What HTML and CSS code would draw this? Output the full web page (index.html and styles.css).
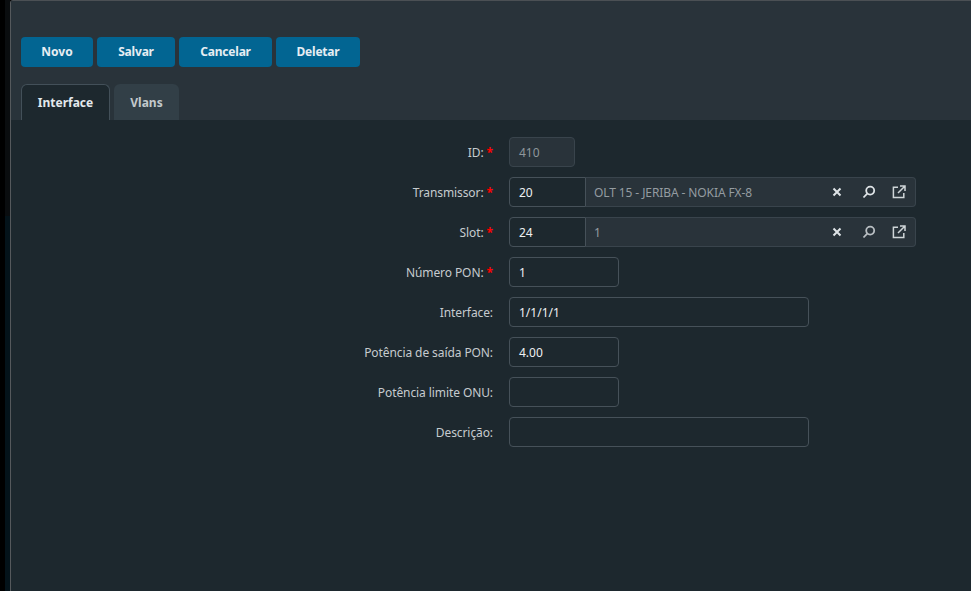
FILE: index.html
```html
<!DOCTYPE html>
<html lang="pt">
<head>
<meta charset="utf-8">
<title>Interface</title>
<link rel="stylesheet" href="styles.css">
</head>
<body>
<div class="backdrop"></div>
<main class="window">
  <header class="head">
    <div class="toolbar">
      <button class="btn btn-novo">Novo</button>
      <button class="btn btn-salvar">Salvar</button>
      <button class="btn btn-cancelar">Cancelar</button>
      <button class="btn btn-deletar">Deletar</button>
    </div>
    <nav class="tabs">
      <div class="tab tab-active">Interface</div>
      <div class="tab tab-idle">Vlans</div>
    </nav>
  </header>
  <form class="form">
    <div class="row">
      <label class="lbl">ID: <span class="req">*</span></label>
      <div class="field f-id disabled">410</div>
    </div>
    <div class="row">
      <label class="lbl">Transmissor: <span class="req">*</span></label>
      <div class="lookup">
        <div class="code">20</div>
        <div class="desc">
          <span class="desc-text">OLT 15 - JERIBA - NOKIA FX-8</span>
          <svg class="ico ico-x" viewBox="0 0 10 10"><path d="M1.5 1.5l7 7M8.5 1.5l-7 7"/></svg>
          <svg class="ico ico-s" viewBox="0 0 14 14"><circle cx="8.2" cy="5.6" r="4"/><path d="M5.2 8.6L1.5 12.5"/></svg>
          <svg class="ico ico-o" viewBox="0 0 14 14"><path d="M6 2.2H1.4v10.4h10.4V8M8 1h5v5M13 1L6 8"/></svg>
        </div>
      </div>
    </div>
    <div class="row">
      <label class="lbl">Slot: <span class="req">*</span></label>
      <div class="lookup">
        <div class="code">24</div>
        <div class="desc">
          <span class="desc-text">1</span>
          <svg class="ico ico-x" viewBox="0 0 10 10"><path d="M1.5 1.5l7 7M8.5 1.5l-7 7"/></svg>
          <svg class="ico ico-s ico-dim" viewBox="0 0 14 14"><circle cx="8.2" cy="5.6" r="4"/><path d="M5.2 8.6L1.5 12.5"/></svg>
          <svg class="ico ico-o" viewBox="0 0 14 14"><path d="M6 2.2H1.4v10.4h10.4V8M8 1h5v5M13 1L6 8"/></svg>
        </div>
      </div>
    </div>
    <div class="row">
      <label class="lbl">Número PON: <span class="req">*</span></label>
      <div class="field f-md">1</div>
    </div>
    <div class="row">
      <label class="lbl">Interface:</label>
      <div class="field f-lg">1/1/1/1</div>
    </div>
    <div class="row">
      <label class="lbl">Potência de saída PON:</label>
      <div class="field f-md">4.00</div>
    </div>
    <div class="row">
      <label class="lbl">Potência limite ONU:</label>
      <div class="field f-md"></div>
    </div>
    <div class="row">
      <label class="lbl">Descrição:</label>
      <div class="field f-lg"></div>
    </div>
  </form>
</main>
</body>
</html>
```
FILE: styles.css
```css
* { box-sizing: border-box; }
html, body { margin: 0; height: 100%; }
body {
  display: flex;
  height: 591px;
  overflow: hidden;
  background: #000;
  font-family: "Noto Sans", sans-serif;
  font-size: 12px;
}
.backdrop {
  width: 10px;
  flex: none;
  background:
    linear-gradient(90deg, #000 0 5px, transparent 5px),
    linear-gradient(180deg, #0a0d0f 0 216px, #04131a 216px);
}
.window {
  flex: 1;
  display: flex;
  flex-direction: column;
  background: #1d282e;
  border-left: 1px solid #55595c;
  border-top: 1px solid #4b5054;
  border-top-left-radius: 3px;
}
.head {
  height: 119px;
  flex: none;
  padding: 36px 0 0 10px;
  background: #29333a;
  display: flex;
  flex-direction: column;
}
.toolbar { display: flex; gap: 4px; }
.btn {
  height: 30px;
  padding: 0 0 2px;
  border: 0;
  border-radius: 4px;
  background: #026592;
  color: #e6edf2;
  font: 700 12px "Noto Sans", sans-serif;
  letter-spacing: -0.2px;
}
.btn-novo { width: 72px; letter-spacing: 0; }
.btn-salvar { width: 78px; }
.btn-cancelar { width: 93px; }
.btn-deletar { width: 84px; }
.tabs { display: flex; gap: 4px; margin-top: 17px; }
.tab {
  height: 36px;
  display: flex;
  align-items: center;
  justify-content: center;
  border-radius: 6px 6px 0 0;
  font-weight: 700;
}
.tab-active {
  width: 89px;
  background: #1d282e;
  border: 1px solid #435059;
  border-bottom: 0;
  color: #e4e9ec;
}
.tab-idle {
  width: 65px;
  background: #323f47;
  color: #c3c9cc;
}
.form {
  padding-top: 17px;
  display: flex;
  flex-direction: column;
  gap: 10px;
}
.row { display: flex; align-items: center; height: 30px; }
.lbl {
  width: 482px;
  margin-right: 16px;
  text-align: right;
  color: #c6cbce;
  white-space: pre;
  letter-spacing: -0.09px;
}
.req { color: #f00; font-size: 12px; font-weight: 700; line-height: 12px; }
.field {
  height: 30px;
  display: flex;
  align-items: center;
  padding: 0 9px;
  border: 1px solid #465159;
  border-radius: 4px;
  color: #edf0f2;
}
.f-id { width: 66px; }
.f-md { width: 110px; }
.f-lg { width: 300px; }
.disabled { background: #29333a; border-color: #39444c; color: #8f979c; }
.lookup {
  width: 407px;
  height: 30px;
  display: flex;
}
.code {
  width: 77px;
  display: flex;
  align-items: center;
  padding-left: 9px;
  border: 1px solid #465159;
  border-radius: 4px 0 0 4px;
  color: #edf0f2;
}
.desc {
  flex: 1;
  display: flex;
  align-items: center;
  padding-left: 8px;
  background: #29333a;
  border: 1px solid #39444c;
  border-left: 0;
  border-radius: 0 4px 4px 0;
  color: #949ca1;
}
.desc-text { flex: 1; letter-spacing: -0.1px; }
.ico {
  flex: none;
  fill: none;
  stroke: #dfe4e7;
  stroke-width: 1.6;
}
.ico-x { width: 10px; height: 10px; stroke-width: 2; }
.ico-s { width: 14px; height: 14px; margin-left: 20px; stroke-width: 1.8; }
.ico-dim { stroke: #b9bfc3; }
.ico-o { width: 14px; height: 14px; margin: 0 9px 0 16px; stroke-width: 1.5; stroke: #cfd5d8; }
```
